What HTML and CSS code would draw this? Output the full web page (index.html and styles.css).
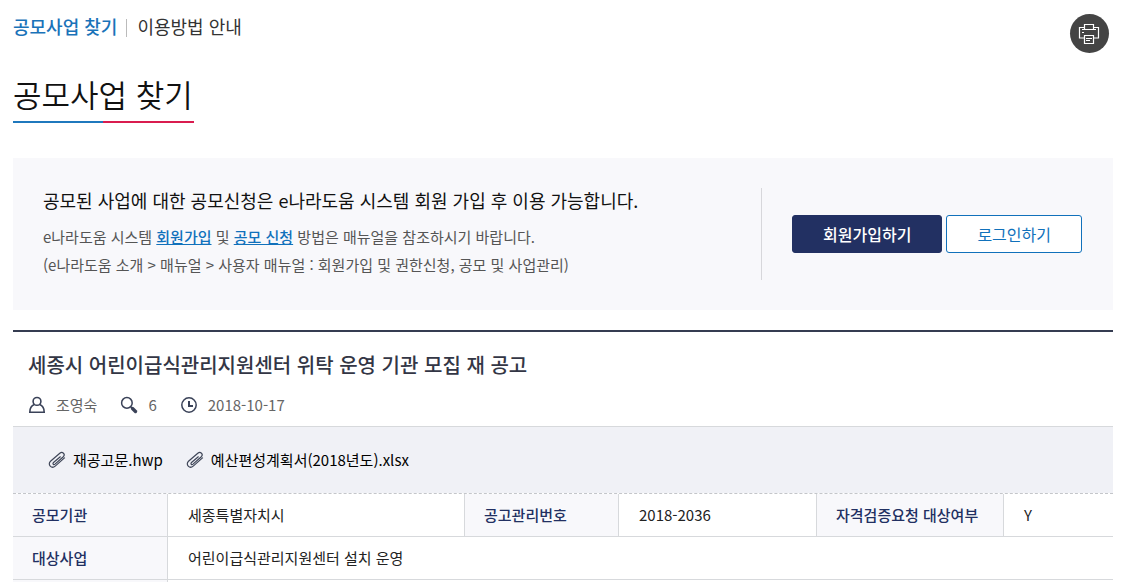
FILE: index.html
```html
<!DOCTYPE html>
<html lang="ko">
<head>
<meta charset="utf-8">
<title>공모사업 찾기</title>
<link rel="stylesheet" href="styles.css">
</head>
<body>
<main class="page">
  <header class="topbar">
    <nav class="tabs">
      <a class="tab tab-active" href="#find">공모사업 찾기</a>
      <a class="tab" href="#guide">이용방법 안내</a>
    </nav>
    <button class="print" type="button" aria-label="인쇄">
      <svg width="39" height="39" viewBox="0 0 39 39" fill="none" stroke="#fff" stroke-width="1.2">
        <path d="M14.500 15.500v-5h9v5M14.500 13.500h-5v10.500h5M23.500 13.500h5v10.500h-5M12 15.500h14"/>
        <path d="M14.500 21.500h9v8h-9zM16 24.500h6M16 26.500h4M12 18.500h2"/>
      </svg>
    </button>
  </header>

  <h1 class="page-title">공모사업 찾기</h1>

  <section class="banner">
    <div class="banner-text">
      <p class="banner-lead">공모된 사업에 대한 공모신청은 e나라도움 시스템 회원 가입 후 이용 가능합니다.</p>
      <p class="banner-note">e나라도움 시스템 <a class="link" href="#join">회원가입</a> 및 <a class="link" href="#apply">공모 신청</a> 방법은 매뉴얼을 참조하시기 바랍니다.</p>
      <p class="banner-note">(e나라도움 소개 &gt; 매뉴얼 &gt; 사용자 매뉴얼 : 회원가입 및 권한신청, 공모 및 사업관리)</p>
    </div>
    <div class="banner-actions">
      <button class="btn btn-primary" type="button">회원가입하기</button>
      <button class="btn btn-outline" type="button">로그인하기</button>
    </div>
  </section>

  <article class="notice">
    <header class="notice-head">
      <h2 class="notice-title">세종시 어린이급식관리지원센터 위탁 운영 기관 모집 재 공고</h2>
      <ul class="meta">
        <li class="meta-item">
          <svg width="18" height="18" viewBox="0 0 18 18" fill="none" stroke="#3a4258" stroke-width="1.6">
            <circle cx="9" cy="5.4" r="3.9"/>
            <path d="M6.3 8.6C3.4 9.6 1.900 11.800 1.800 16.200h14.400c-.1-4.400-1.600-6.600-4.500-7.600"/>
          </svg>
          조영숙
        </li>
        <li class="meta-item">
          <svg width="18" height="18" viewBox="0 0 18 18" fill="none" stroke="#3a4258">
            <circle cx="6.900" cy="6.900" r="5.300" stroke-width="1.500"/>
            <path d="M10.700 10.700l2 2" stroke-width="1.500"/>
            <path d="M12.500 12.500l3 3" stroke-width="3.400" stroke-linecap="round"/>
          </svg>
          6
        </li>
        <li class="meta-item">
          <svg width="18" height="18" viewBox="0 0 18 18" fill="none" stroke="#3a4258">
            <circle cx="9" cy="9" r="7.200" stroke-width="1.500"/>
            <path d="M9 5v5h4" stroke-width="2"/>
          </svg>
          2018-10-17
        </li>
      </ul>
    </header>
    <ul class="files">
      <li>
        <a class="file" href="#file-1">
          <svg width="18" height="18" viewBox="0 0 18 18" fill="none" stroke="#3f4658" stroke-width="1.2" stroke-linecap="round">
            <path d="M12.300 5.800L5.500 11.500c-1.400 1.300.2 2.700 1.500 1.600l8.300-7.400c2.400-2.600-.9-5.600-3.500-3.400L2.500 10.300c-3.400 3.200 1.100 7.900 4.700 4.800l9.300-8.200"/>
          </svg>
          재공고문.hwp
        </a>
      </li>
      <li>
        <a class="file" href="#file-2">
          <svg width="18" height="18" viewBox="0 0 18 18" fill="none" stroke="#3f4658" stroke-width="1.2" stroke-linecap="round">
            <path d="M12.300 5.800L5.500 11.500c-1.400 1.300.2 2.700 1.500 1.600l8.300-7.400c2.400-2.600-.9-5.600-3.500-3.400L2.500 10.300c-3.400 3.200 1.100 7.900 4.700 4.800l9.300-8.200"/>
          </svg>
          예산편성계획서(2018년도).xlsx
        </a>
      </li>
    </ul>
    <table class="info">
      <colgroup>
        <col class="col-a"><col class="col-b"><col class="col-a"><col class="col-d"><col class="col-e"><col class="col-f">
      </colgroup>
      <tbody>
        <tr>
          <th scope="row">공모기관</th><td>세종특별자치시</td>
          <th scope="row">공고관리번호</th><td>2018-2036</td>
          <th scope="row">자격검증요청 대상여부</th><td>Y</td>
        </tr>
        <tr>
          <th scope="row">대상사업</th><td colspan="5">어린이급식관리지원센터 설치 운영</td>
        </tr>
        <tr>
          <th scope="row"></th><td colspan="5"></td>
        </tr>
      </tbody>
    </table>
  </article>
</main>
</body>
</html>
```
FILE: styles.css
```css
* { box-sizing: border-box; }

body {
  margin: 0;
  height: 100vh;
  overflow: hidden;
  background: #fff;
  color: #222;
  font-family: "Noto Sans CJK KR", "Noto Sans KR", sans-serif;
  font-size: 15px;
  line-height: 24px;
}

h1, h2, p, ul { margin: 0; padding: 0; }
ul { list-style: none; }
a { color: inherit; text-decoration: none; }
svg { display: block; flex: none; }
button { font-family: inherit; cursor: pointer; }

.page { padding: 14px 10px 0 13px; }

.topbar {
  display: flex;
  justify-content: space-between;
  align-items: flex-start;
}
.tabs { display: flex; align-items: center; }
.tab { font-size: 18px; line-height: 24px; color: #333; }
.tab-active { color: #1a73b9; font-weight: 500; }
.tab + .tab {
  margin-left: 9px;
  padding-left: 11px;
  background: linear-gradient(#bbb, #bbb) 0 5px / 1px 18px no-repeat;
}
.print {
  width: 39px;
  height: 39px;
  margin-right: 4px;
  padding: 0;
  border: 0;
  border-radius: 50%;
  background: #444;
}

.page-title {
  width: fit-content;
  margin-top: 19px;
  padding: 0 1px 7px 0;
  font-size: 31px;
  line-height: 44px;
  font-weight: 350;
  color: #111;
  background: linear-gradient(90deg, #1f78bd 50%, #d91c4f 50%) 0 100% / 100% 2px no-repeat;
}

.banner {
  display: flex;
  align-items: center;
  justify-content: space-between;
  margin-top: 35px;
  padding: 30px 31px 30px 30px;
  background: #f8f8fb;
}
.banner-text { align-self: flex-start; }
.banner-lead { font-size: 18px; line-height: 24px; margin-bottom: 11px; color: #111; }
.banner-note { line-height: 28px; color: #555; }
.link { color: #1171bb; font-weight: 500; text-decoration: underline; }
.banner-actions {
  display: flex;
  align-items: center;
  gap: 4px;
  height: 92px;
  padding-left: 30px;
  border-left: 1px solid #d7d7db;
}
.btn {
  height: 38px;
  padding: 0 30px;
  border: 1px solid #1171bb;
  border-radius: 3px;
  font-size: 16px;
  line-height: 24px;
}
.btn-primary { background: #223062; border-color: #223062; color: #fff; font-weight: 500; }
.btn-outline { background: #fff; color: #1171bb; }

.notice { margin-top: 20px; border-top: 2px solid #353c51; }
.notice-head { padding: 18px 15px 9px; border-bottom: 1px solid #d7d9dc; }
.notice-title { font-size: 20px; line-height: 30px; font-weight: 500; color: #333645; }
.meta { display: flex; gap: 23px; margin-top: 13px; }
.meta-item { display: flex; align-items: center; gap: 10px; color: #666; }

.files {
  display: flex;
  gap: 23px;
  padding: 21px 35px;
  background: #f0f1f6;
}
.file { display: flex; align-items: center; gap: 7px; color: #000; }

.info {
  width: 100%;
  table-layout: fixed;
  border-collapse: separate;
  border-spacing: 0;
  border-top: 1px dashed #c4c6ca;
}
.col-a { width: 14%; }
.col-b { width: 27%; }
.col-d { width: 18%; }
.col-e { width: 17%; }
.col-f { width: 10%; }
.info th, .info td {
  height: 43px;
  padding: 0 19px;
  border-bottom: 1px solid #d7d9dc;
  border-left: 1px solid #d7d9dc;
  text-align: left;
  white-space: nowrap;
}
.info td { padding-left: 20px; }
.info th { background: #f8f8fb; color: #223062; font-weight: 500; }
.info th:first-child { border-left: 0; }
```
